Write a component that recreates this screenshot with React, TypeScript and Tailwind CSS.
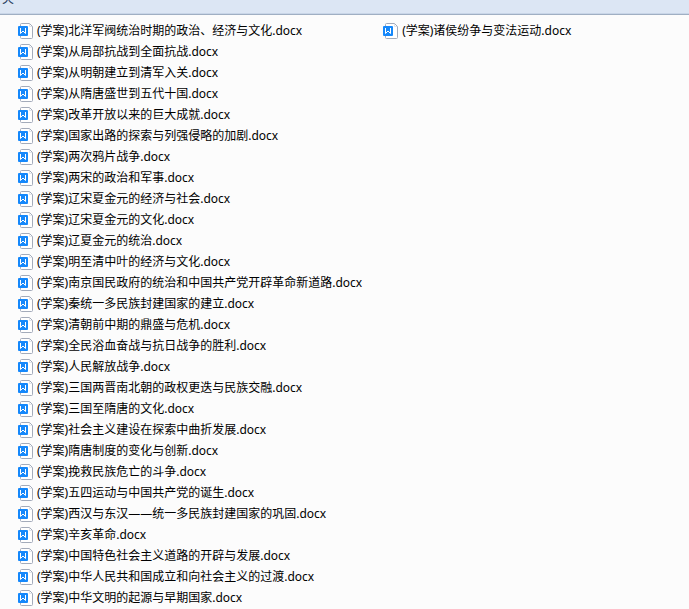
const columns = [
    [
        "(学案)北洋军阀统治时期的政治、经济与文化.docx",
        "(学案)从局部抗战到全面抗战.docx",
        "(学案)从明朝建立到清军入关.docx",
        "(学案)从隋唐盛世到五代十国.docx",
        "(学案)改革开放以来的巨大成就.docx",
        "(学案)国家出路的探索与列强侵略的加剧.docx",
        "(学案)两次鸦片战争.docx",
        "(学案)两宋的政治和军事.docx",
        "(学案)辽宋夏金元的经济与社会.docx",
        "(学案)辽宋夏金元的文化.docx",
        "(学案)辽夏金元的统治.docx",
        "(学案)明至清中叶的经济与文化.docx",
        "(学案)南京国民政府的统治和中国共产党开辟革命新道路.docx",
        "(学案)秦统一多民族封建国家的建立.docx",
        "(学案)清朝前中期的鼎盛与危机.docx",
        "(学案)全民浴血奋战与抗日战争的胜利.docx",
        "(学案)人民解放战争.docx",
        "(学案)三国两晋南北朝的政权更迭与民族交融.docx",
        "(学案)三国至隋唐的文化.docx",
        "(学案)社会主义建设在探索中曲折发展.docx",
        "(学案)隋唐制度的变化与创新.docx",
        "(学案)挽救民族危亡的斗争.docx",
        "(学案)五四运动与中国共产党的诞生.docx",
        "(学案)西汉与东汉——统一多民族封建国家的巩固.docx",
        "(学案)辛亥革命.docx",
        "(学案)中国特色社会主义道路的开辟与发展.docx",
        "(学案)中华人民共和国成立和向社会主义的过渡.docx",
        "(学案)中华文明的起源与早期国家.docx",
    ],
    ["(学案)诸侯纷争与变法运动.docx"],
];

function DocIcon() {
    return (
        <svg className="h-4 w-4 shrink-0" viewBox="0 0 16 16" fill="none" aria-hidden="true">
            <path d="M2.5 1.5a1 1 0 0 1 1-1h8l3 3v11a1 1 0 0 1-1 1h-10a1 1 0 0 1-1-1z" fill="#fff" stroke="#a3abba" />
            <path d="M11.5 1v2.5h2.5" stroke="#dfe3ea" />
            <rect y="3" width="10" height="10" rx="1" fill="#1588fb" />
            <path d="M2.5 5v5.5L5 8l2.5 2.5V5" stroke="#fff" />
        </svg>
    );
}

function FileRow({ name }: { name: string }) {
    return (
        <li className="flex h-[21px] items-center gap-[3px]">
            <DocIcon />
            <span className="whitespace-nowrap">{name}</span>
        </li>
    );
}

export default function App() {
    return (
        <div className="min-h-screen bg-[#fcfcfc] font-['Noto_Sans','Noto_Sans_CJK_SC',sans-serif] text-xs text-black">
            <header className="flex h-[15px] items-end overflow-hidden border-b border-[#a0afc3] bg-[#dce6f4] pb-[7px] text-[#1e395b] shadow-[inset_0_-1px_0_#c9d6e8]">
                <span className="-ml-[10px] leading-4">件夹</span>
            </header>
            <main className="flex gap-[21px] overflow-hidden pt-[5px] pl-[18px]">
                {columns.map((files, i) => (
                    <ul key={i} className="shrink-0">
                        {files.map((name) => (
                            <FileRow key={name} name={name} />
                        ))}
                    </ul>
                ))}
            </main>
        </div>
    );
}
